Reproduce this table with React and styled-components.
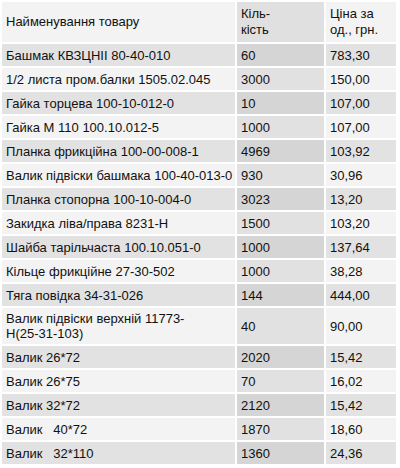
import React from 'react';
import styled, { createGlobalStyle } from 'styled-components';

const GlobalStyle = createGlobalStyle`
  html, body {
    margin: 0;
    padding: 0;
    background: #ffffff;
  }
  body {
    font-family: "Liberation Sans", Arial, sans-serif;
  }
`;

const Table = styled.table`
  width: 398px;
  border-collapse: separate;
  border-spacing: 2px 2px;
  font-size: 13px;
  color: #111;
  table-layout: fixed;
`;

const HeadCell = styled.th`
  height: 40px;
  padding: 0 4px;
  text-align: left;
  font-weight: normal;
  line-height: 16px;
  vertical-align: middle;
  background: ${(p) => (p.$mid ? '#e0e0e0' : '#f3f3f3')};
`;

const Cell = styled.td`
  height: 16px;
  padding: 3px 2px 3px 4px;
  line-height: 15px;
  vertical-align: middle;
  white-space: pre;
  overflow: hidden;
  background: ${(p) =>
    p.$odd
      ? p.$mid ? '#d5d5d5' : '#e2e2e2'
      : p.$mid ? '#e1e1e1' : '#f3f3f3'};
`;

const rows = [
  ['Башмак КВЗЦНІІ 80-40-010', '60', '783,30'],
  ['1/2 листа пром.балки 1505.02.045', '3000', '150,00'],
  ['Гайка торцева 100-10-012-0', '10', '107,00'],
  ['Гайка М 110 100.10.012-5', '1000', '107,00'],
  ['Планка фрикційна 100-00-008-1', '4969', '103,92'],
  ['Валик підвіски башмака 100-40-013-0', '930', '30,96'],
  ['Планка стопорна 100-10-004-0', '3023', '13,20'],
  ['Закидка ліва/права 8231-Н', '1500', '103,20'],
  ['Шайба тарільчаста 100.10.051-0', '1000', '137,64'],
  ['Кільце фрикційне 27-30-502', '1000', '38,28'],
  ['Тяга повідка 34-31-026', '144', '444,00'],
  ['Валик підвіски верхній 11773-\nН(25-31-103)', '40', '90,00'],
  ['Валик 26*72', '2020', '15,42'],
  ['Валик 26*75', '70', '16,02'],
  ['Валик 32*72', '2120', '15,42'],
  ['Валик   40*72', '1870', '18,60'],
  ['Валик   32*110', '1360', '24,36'],
];

export default function App() {
  return (
    <>
      <GlobalStyle />
      <Table>
        <colgroup>
          <col style={{ width: 233 }} />
          <col style={{ width: 87 }} />
          <col style={{ width: 70 }} />
        </colgroup>
        <thead>
          <tr>
            <HeadCell>Найменування товару</HeadCell>
            <HeadCell $mid>Кіль-<br />кість</HeadCell>
            <HeadCell>Ціна за<br />од., грн.</HeadCell>
          </tr>
        </thead>
        <tbody>
          {rows.map(([name, qty, price], i) => (
            <tr key={i}>
              <Cell $odd={i % 2 === 0}>{name}</Cell>
              <Cell $odd={i % 2 === 0} $mid>{qty}</Cell>
              <Cell $odd={i % 2 === 0}>{price}</Cell>
            </tr>
          ))}
        </tbody>
      </Table>
    </>
  );
}
